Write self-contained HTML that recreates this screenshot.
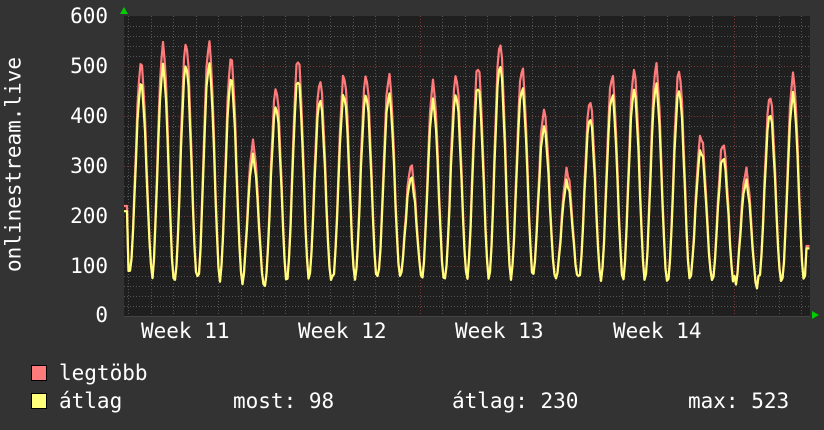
<!DOCTYPE html>
<html><head><meta charset="utf-8"><style>
html,body{margin:0;padding:0;background:#333;}
body{width:824px;height:430px;overflow:hidden;position:relative;font-family:"DejaVu Sans Mono","Liberation Mono",monospace;color:#fff;}
.t{position:absolute;font-size:21px;line-height:21px;white-space:pre;}
.r{text-align:right;width:62px;}
.sq{position:absolute;width:14px;height:14px;border:1px solid #000;}
</style></head><body>
<svg id="g" width="824" height="430" style="position:absolute;left:0;top:0">
<rect x="124" y="16" width="686" height="300" fill="#1f1f1f"/>
<g id="grid"></g>
<g id="data"></g>
<polygon points="120,14 128,14 124,7" fill="#0c0"/>
<polygon points="812,311 812,319 819,315" fill="#0c0"/>
</svg>
<div class="t r" style="left:46px;top:6px">600</div>
<div class="t r" style="left:46px;top:56px">500</div>
<div class="t r" style="left:46px;top:106px">400</div>
<div class="t r" style="left:46px;top:156px">300</div>
<div class="t r" style="left:46px;top:206px">200</div>
<div class="t r" style="left:46px;top:256px">100</div>
<div class="t r" style="left:46px;top:305px">0</div>
<div class="t" style="left:-96px;top:154px;transform:rotate(-90deg);width:220px;text-align:center">onlinestream.live</div>
<div class="t" style="left:141px;top:321px">Week 11</div>
<div class="t" style="left:298px;top:321px">Week 12</div>
<div class="t" style="left:455px;top:321px">Week 13</div>
<div class="t" style="left:613px;top:321px">Week 14</div>
<div class="sq" style="left:31px;top:365px;background:#ff7b7b"></div>
<div class="sq" style="left:31px;top:393px;background:#ffff7b"></div>
<div class="t" style="left:59px;top:363px">legtöbb</div>
<div class="t" style="left:59px;top:391px">átlag</div>
<div class="t" style="left:233px;top:391px">most: 98</div>
<div class="t" style="left:452px;top:391px">átlag: 230</div>
<div class="t" style="left:688px;top:391px">max: 523</div>
<script>
var ns="http://www.w3.org/2000/svg";
var grid=document.getElementById('grid'),data=document.getElementById('data');
function ln(x1,y1,x2,y2,c,d,w){var l=document.createElementNS(ns,'line');l.setAttribute('x1',x1);l.setAttribute('y1',y1);l.setAttribute('x2',x2);l.setAttribute('y2',y2);l.setAttribute('stroke',c);l.setAttribute('stroke-width',w||1);if(d)l.setAttribute('stroke-dasharray',d);grid.appendChild(l);}
for(var y=26;y<316;y+=10){var maj=((316-y)%50==0);ln(124,y+.5,810,y+.5,maj?'#7a3a3a':'#555','1,2');}
for(var x=420-22.43*13;x<810;x+=22.43){if(x<125)continue;var k=Math.round((x-420)/22.43);var maj=(k%7==0);ln(Math.round(x)+.5,16,Math.round(x)+.5,316,maj?'#7a3a3a':'#555','1,2');}
ln(124,316.5,810,316.5,'#444');
var peaks=[[141,505],[163,540],[186,545],[209,545],[231,515],[253,345],[276,455],[298,515],[320,470],[344,480],[366,480],[389,480],[411,300],[433,465],[456,480],[478,500],[500,545],[522,495],[544,410],[567,290],[590,430],[612,480],[634,490],[656,500],[679,490],[701,360],[723,345],[746,290],[770,440],[793,480]];
var mins=[90,70,72,68,75,60,60,70,72,72,70,80,75,72,75,70,72,75,80,75,70,70,68,70,70,72,60,55,70,70];
function val(x,f){
 for(var i=0;i<peaks.length;i++){var p=peaks[i];var d=(x-p[0])/22.43;if(Math.abs(d)<0.5){var s=Math.cos(Math.PI*d);s=Math.max(0,s);var m=mins[i];var pk=m+(p[1]*f-m);var v=m+(pk-m)*Math.pow(s,1.9);var jit=Math.sin(x*1.7+i)*8*f;return v+jit*s;}}
 if(x<peaks[0][0])return 90+(x<128?130*f:0);
 return 80+(x>806?60*f:0);}
function path(f,col){var d='';for(var x=124;x<=810;x+=1.5){var v=val(x,f);var y=316-v*0.5;d+=(d?'L':'M')+x.toFixed(1)+','+y.toFixed(1);}
 var p=document.createElementNS(ns,'path');p.setAttribute('d',d);p.setAttribute('fill','none');p.setAttribute('stroke',col);p.setAttribute('stroke-width','2.2');p.setAttribute('stroke-linejoin','round');data.appendChild(p);}
path(1,'#ff7b7b');path(0.92,'#ffff7b');
</script>
</body></html>
